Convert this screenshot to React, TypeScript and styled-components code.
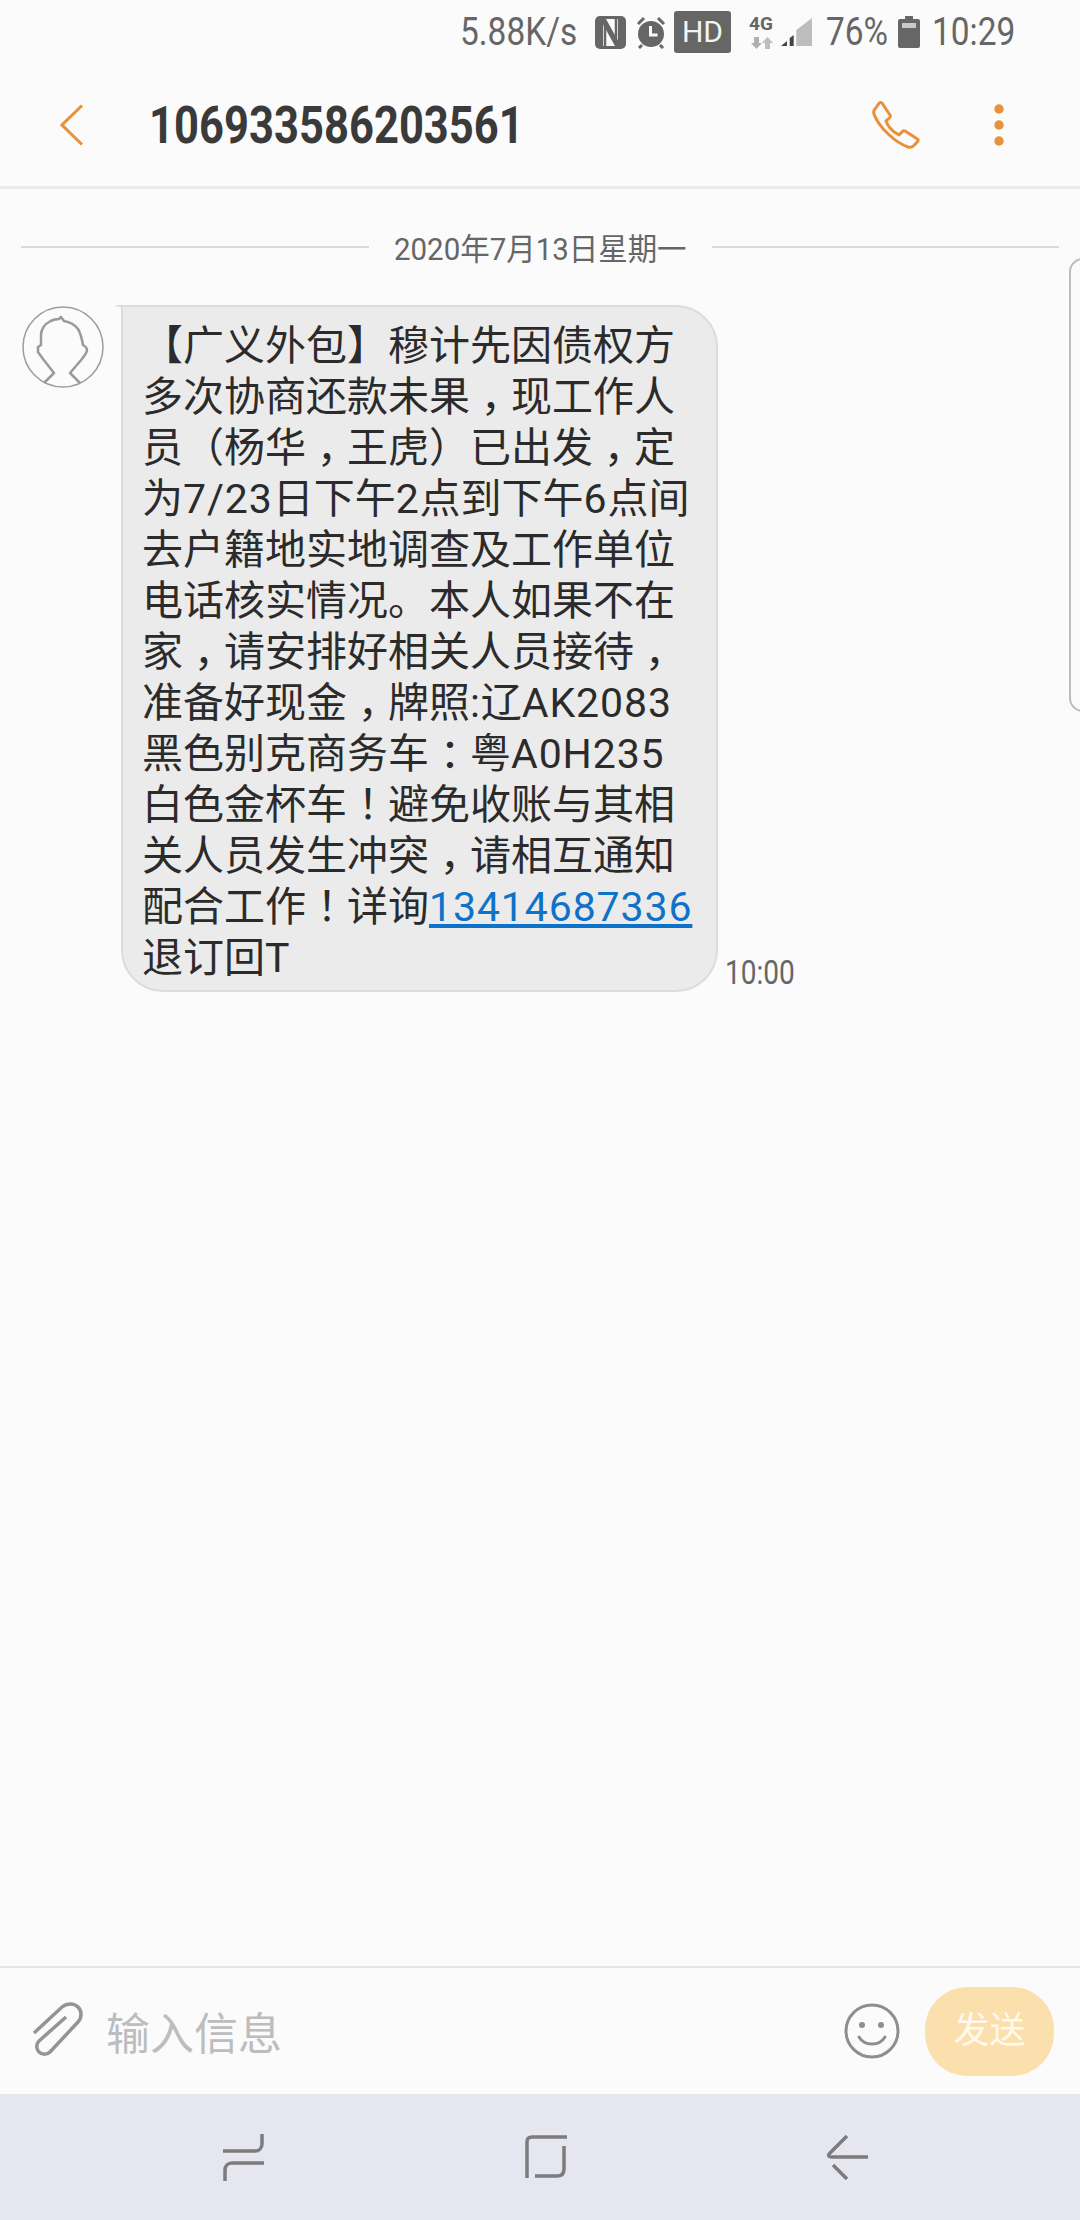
import styled, { createGlobalStyle } from 'styled-components'

const GlobalStyle = createGlobalStyle`
  html, body {
    margin: 0;
    padding: 0;
    background: #fbfbfb;
  }
  body {
    font-family: Roboto, "Noto Sans CJK SC", sans-serif;
  }
`

const ORANGE = '#e8913a'
const GREY = '#666666'
const NAV_GREY = '#7c7c7c'

const Page = styled.div`
  width: 1080px;
  height: 2220px;
  display: flex;
  flex-direction: column;
  background: #fbfbfb;
  overflow: hidden;
`

const StatusBar = styled.div`
  height: 60px;
  display: flex;
  align-items: center;
  padding: 4px 0 0 460px;
  box-sizing: border-box;
  color: ${GREY};
`

// Roboto Condensed isn't available, so squeeze regular Roboto sideways.
// $w is the width after squeezing, the negative margin gives the rest back to the flow
const Narrow = styled.span<{ $w: number; $size: number; $squeeze: number; $weight?: number }>`
  display: inline-block;
  flex: none;
  width: ${(p) => p.$w / p.$squeeze}px;
  margin-right: ${(p) => p.$w - p.$w / p.$squeeze}px;
  font-size: ${(p) => p.$size}px;
  font-weight: ${(p) => p.$weight ?? 400};
  white-space: nowrap;
  transform: scaleX(${(p) => p.$squeeze});
  transform-origin: left center;
`

const StatusIcon = styled.svg<{ $ml: number }>`
  flex: none;
  margin-left: ${(p) => p.$ml}px;
  display: block;
`

const HdBadge = styled.div`
  flex: none;
  width: 57px;
  height: 42px;
  margin-left: 8px;
  border-radius: 3px;
  background: ${GREY};
  color: #f4f4f4;
  font-size: 30px;
  line-height: 42px;
  text-align: center;
`

const NetworkStack = styled.div`
  flex: none;
  width: 26px;
  margin-left: 18px;
  display: flex;
  flex-direction: column;
  gap: 5px;
`

const NetworkLabel = styled.div`
  height: 16px;
  font-size: 19px;
  font-weight: 700;
  line-height: 16px;
`

const StatusLabel = styled.div<{ $ml: number }>`
  flex: none;
  margin-left: ${(p) => p.$ml}px;
  display: flex;
`

const Toolbar = styled.div`
  height: 129px;
  display: flex;
  align-items: center;
  box-sizing: border-box;
  border-bottom: 3px solid #ebebeb;
  padding-top: 4px;
`

const IconSlot = styled.svg<{ $ml: number }>`
  flex: none;
  display: block;
  margin-left: ${(p) => p.$ml}px;
`

const Title = styled.div`
  flex: none;
  width: 371px;
  margin-left: 65px;
  color: #3a3a3a;
  display: flex;
`

const Thread = styled.div`
  flex: 1;
  display: flex;
  flex-direction: column;
`

const DateRow = styled.div`
  height: 116px;
  display: flex;
  align-items: center;
  padding: 0 21px;
  box-sizing: border-box;
`

const DateLine = styled.div`
  flex: 1;
  height: 2px;
  background: #dadada;
`

const DateText = styled.div`
  flex: none;
  width: 293px;
  margin: 0 25px 2px;
  color: ${GREY};
  display: flex;
`

const MessageRow = styled.div`
  display: flex;
  align-items: flex-start;
`

const Avatar = styled.svg`
  flex: none;
  display: block;
  margin: 1px 17px 0 22px;
`

const Bubble = styled.div`
  position: relative;
  flex: none;
  width: 597px;
  height: 687px;
  box-sizing: border-box;
  padding: 14px 0 0 19px;
  border: 2px solid #dcdcdc;
  border-radius: 0 42px 42px 42px;
  background: #ebebeb;
  color: #2b2b2b;
  font-size: 41px;
  line-height: 51px;
  white-space: nowrap;

  &::before {
    content: '';
    position: absolute;
    left: -7px;
    top: -2px;
    width: 6px;
    height: 14px;
    background: radial-gradient(circle at 0 100%, transparent 0 12px, #dcdcdc 13px);
  }
`

const Latin = styled.span`
  letter-spacing: 0.9px;
`

// the phone's font centres these marks in their cell, Noto keeps them on the left
const Punct = styled.span`
  padding-left: 0.26em;
  letter-spacing: -0.26em;
`

const PhoneLink = styled.span`
  color: #0f72c9;
  letter-spacing: 0.9px;
  text-decoration: underline;
  text-underline-offset: 3px;
`

const TimeStamp = styled.div`
  flex: none;
  align-self: flex-end;
  width: 69px;
  margin: 0 0 -1px 7px;
  color: ${GREY};
  line-height: 40px;
  display: flex;
`

const NextBubble = styled.div`
  flex: none;
  width: 30px;
  height: 454px;
  margin: -47px 0 0 auto;
  box-sizing: border-box;
  border: 2px solid #bdbdbd;
  border-right: none;
  border-radius: 14px 0 0 14px;
  transform: translateX(19px);
`

const Composer = styled.div`
  height: 128px;
  display: flex;
  align-items: center;
  box-sizing: border-box;
  border-top: 2px solid #e6e6e6;
`

const Placeholder = styled.div`
  flex: 1;
  margin-left: 22px;
  color: #bdbdbd;
  font-size: 44px;
`

const SendButton = styled.div`
  flex: none;
  width: 129px;
  height: 89px;
  margin: 0 26px 0 25px;
  border-radius: 42px;
  background: #fbdfad;
  color: #fff9ee;
  font-size: 36px;
  line-height: 89px;
  text-align: center;
`

const NavBar = styled.div`
  height: 126px;
  flex: none;
  background: #e5e6f0;
  display: flex;
  align-items: center;
  justify-content: center;
  gap: 260px;
  padding-left: 11px;
`

const lines = [
  '【广义外包】穆计先因债权方',
  '多次协商还款未果，现工作人',
  '员（杨华，王虎）已出发，定',
  '为7/23日下午2点到下午6点间',
  '去户籍地实地调查及工作单位',
  '电话核实情况。本人如果不在',
  '家，请安排好相关人员接待，',
  '准备好现金，牌照:辽AK2083',
  '黑色别克商务车：粤A0H235',
  '白色金杯车！避免收账与其相',
  '关人员发生冲突，请相互通知',
  '配合工作！详询',
]

const renderLine = (line: string) =>
  line.split(/([0-9A-Za-z/:]+|[，！：])/).map((part, i) => {
    if (/^[，！：]$/.test(part)) return <Punct key={i}>{part}</Punct>
    if (/^[0-9A-Za-z/:]+$/.test(part)) return <Latin key={i}>{part}</Latin>
    return part
  })

const App = () => {
  return (
    <Page>
      <GlobalStyle />
      <StatusBar>
        <Narrow $w={124} $size={38} $squeeze={0.88}>5.88K/s</Narrow>
        <StatusIcon $ml={11} width="31" height="33" viewBox="0 0 31 33">
          <rect width="31" height="33" rx="5" fill={GREY} />
          <rect x="8" y="3" width="15" height="27" fill="#fbfbfb" />
          <path d="M5 3h6l15 27h-6z" fill={GREY} />
          <path d="M10 30V9M21 3v21" stroke={GREY} strokeWidth="2.500" />
        </StatusIcon>
        <StatusIcon $ml={10} width="30" height="34" viewBox="0 0 30 34">
          <circle cx="15" cy="19" r="13" fill={GREY} />
          <path d="M14.500 11v9h7" fill="none" stroke="#fbfbfb" strokeWidth="3" />
          <path d="M2 9l6-6M28 9l-6-6M6 30l-3 3M24 30l3 3" stroke={GREY} strokeWidth="3" />
        </StatusIcon>
        <HdBadge>HD</HdBadge>
        <NetworkStack>
          <NetworkLabel>4G</NetworkLabel>
          <svg width="26" height="12" viewBox="0 22 26 12">
            <path d="M5 22h5v6h3l-5.500 6L2 28h3z" fill="#b0b0b0" />
            <path d="M16 34h5v-6h3l-5.500-6L13 28h3z" fill="#bdbdbd" />
          </svg>
        </NetworkStack>
        <StatusIcon $ml={6} width="31" height="28" viewBox="0 0 31 28">
          <path d="M0 28L6 23v5z" fill="#444" />
          <path d="M8.700 20L12.700 17v11h-4z" fill="#444" />
          <path d="M15.300 28V12L31 0v28z" fill="#bdbdbd" />
        </StatusIcon>
        <StatusLabel $ml={14}>
          <Narrow $w={60} $size={38} $squeeze={0.88}>76%</Narrow>
        </StatusLabel>
        <StatusIcon $ml={12} width="22" height="32" viewBox="0 0 22 32">
          <path d="M7 0h8v3h5a2 2 0 0 1 2 2v25a2 2 0 0 1-2 2H2a2 2 0 0 1-2-2V5a2 2 0 0 1 2-2h5z" fill={GREY} />
          <rect x="4" y="7" width="14" height="5" fill="#c9c9c9" />
        </StatusIcon>
        <StatusLabel $ml={12}>
          <Narrow $w={81} $size={38} $squeeze={0.88}>10:29</Narrow>
        </StatusLabel>
      </StatusBar>

      <Toolbar>
        <IconSlot $ml={60} width="24" height="42" viewBox="0 0 24 42">
          <path d="M22 1.500L2 21l20 19.500" fill="none" stroke={ORANGE} strokeWidth="3" />
        </IconSlot>
        <Title>
          <Narrow $w={371} $size={51} $squeeze={0.854} $weight={700}>106933586203561</Narrow>
        </Title>
        <IconSlot $ml={351} width="50" height="50" viewBox="0 0 50 50">
          <path
            d="M11 3l8 12c.6 1 .4 2-.4 2.800l-3.600 3c1 4 6 11 13 14l3.600-3.400c.8-.8 1.800-.8 2.800-.2l12 7.800c1 .7 1 1.800.2 2.600l-4 4.200c-1.500 1.500-3.500 1.800-5.500 1.200C25 43 8 28 3 14c-.6-2-.2-3.800 1-5l4-5.600c.8-1 2.200-1.200 3-.4z"
            fill="none"
            stroke={ORANGE}
            strokeWidth="3"
            strokeLinejoin="round"
          />
        </IconSlot>
        <IconSlot $ml={73} width="10" height="42" viewBox="0 0 10 42">
          <circle cx="5" cy="5" r="4.700" fill={ORANGE} />
          <circle cx="5" cy="21" r="4.700" fill={ORANGE} />
          <circle cx="5" cy="37" r="4.700" fill={ORANGE} />
        </IconSlot>
      </Toolbar>

      <Thread>
        <DateRow>
          <DateLine />
          <DateText>
            <Narrow $w={293} $size={31} $squeeze={0.95}>2020年7月13日星期一</Narrow>
          </DateText>
          <DateLine />
        </DateRow>
        <MessageRow>
          <Avatar width="82" height="82" viewBox="0 0 82 82">
            <circle cx="41" cy="41" r="40" fill="none" stroke="#9c9c9c" strokeWidth="1.500" />
            <path
              d="M22 77l10-10-11-14-5-7v-5l3-2V28c1-6 4-10 8-12 3-2 7-3 10-3l2-2 3 4c6 1 11 4 14 8 3 5 4 10 5 16 2 1 4 3 4 5 0 3-3 6-5 9L48 67l10 10"
              fill="none"
              stroke="#9a9a9a"
              strokeWidth="2.500"
              strokeLinejoin="round"
            />
          </Avatar>
          <Bubble>
            {lines.slice(0, -1).map((line) => (
              <div key={line}>{renderLine(line)}</div>
            ))}
            <div>
              {renderLine(lines[lines.length - 1])}
              <PhoneLink>13414687336</PhoneLink>
            </div>
            <div>退订回T</div>
          </Bubble>
          <TimeStamp>
            <Narrow $w={69} $size={33} $squeeze={0.85}>10:00</Narrow>
          </TimeStamp>
          <NextBubble />
        </MessageRow>
      </Thread>

      <Composer>
        <IconSlot $ml={32} width="52" height="58" viewBox="0 0 52 58">
          <path
            d="M2 31L30 5c5-4 12-4 16 0s4 11 0 15L18 50c-3 3-8 3-11 0s-3-8 0-11L34 15"
            fill="none"
            stroke="#949494"
            strokeWidth="3.500"
          />
        </IconSlot>
        <Placeholder>输入信息</Placeholder>
        <IconSlot $ml={0} width="56" height="56" viewBox="0 0 56 56">
          <circle cx="28" cy="28" r="26" fill="none" stroke="#8e8e8e" strokeWidth="3" />
          <circle cx="18" cy="22" r="3" fill="#8e8e8e" />
          <circle cx="37" cy="22" r="3" fill="#8e8e8e" />
          <path d="M15 34c3 5 8 7 13 7s10-2 13-7" fill="none" stroke="#8e8e8e" strokeWidth="3" strokeLinecap="round" />
        </IconSlot>
        <SendButton>发送</SendButton>
      </Composer>

      <NavBar>
        <svg width="42" height="47" viewBox="0 0 42 47">
          <path d="M0 17h32c4 0 7-3 7-7V0M41 29H9c-4 0-7 3-7 7v11" fill="none" stroke={NAV_GREY} strokeWidth="3.500" />
        </svg>
        <svg width="42" height="44" viewBox="0 0 42 44">
          <path d="M2 43V7Q2 2 7 2H42M39 11V34Q39 41 32 41H10" fill="none" stroke={NAV_GREY} strokeWidth="3.500" />
        </svg>
        <svg width="41" height="45" viewBox="0 0 41 45">
          <path d="M20 1L3 18c-2 2-2 4 2 4h36M6 30l14 14" fill="none" stroke={NAV_GREY} strokeWidth="3.500" />
        </svg>
      </NavBar>
    </Page>
  )
}

export default App
